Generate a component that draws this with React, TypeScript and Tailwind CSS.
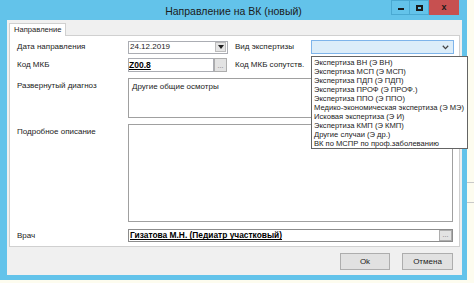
import React from "react";

const font = { fontFamily: '"Liberation Sans", Arial, sans-serif' };

function DotsButton() {
  return (
    <div className="w-[13px] h-full bg-[#e3e3e3] border border-[#adadad] flex items-end justify-center text-[7px] leading-none text-[#707070] pb-[2px]">
      ...
    </div>
  );
}

const items = [
  "Экспертиза ВН (Э ВН)",
  "Экспертиза МСП (Э МСП)",
  "Экспертиза ПДП (Э ПДП)",
  "Экспертиза ПРОФ (Э ПРОФ.)",
  "Экспертиза ППО (Э ППО)",
  "Медико-экономическая экспертиза (Э МЭ)",
  "Исковая экспертиза (Э И)",
  "Экспертиза КМП (Э КМП)",
  "Другие случаи (Э др.)",
  "ВК по МСПР по проф.заболеванию",
];

export default function App() {
  return (
    <div
      className="w-[474px] h-[283px] bg-[#fdfcef] relative overflow-hidden text-[#222]"
      style={font}
    >
      {/* background faint lines to the right */}
      <div className="absolute left-[467px] top-[182px] w-[7px] h-px bg-[#c9c9c9]" />
      <div className="absolute left-[467px] top-[202px] w-[7px] h-px bg-[#c9c9c9]" />

      {/* window */}
      <div className="w-[467px] h-[280px] bg-[#63c3ea] flex flex-col">
        {/* title bar */}
        <div className="h-[20px] relative flex items-center justify-center">
          <span className="text-[10.5px] text-[#1b1b1b] mt-[3px]">Направление на ВК (новый)</span>
          <div className="absolute right-[8px] top-0 flex h-[15px]">
            <div className="w-[19px] h-full border border-[#4aa9d2] flex items-center justify-center">
              <div className="w-[6px] h-[2px] bg-[#1a1a1a] mt-[3px]" />
            </div>
            <div className="w-[19px] h-full border border-[#4aa9d2] border-l-0 flex items-center justify-center">
              <div className="w-[7px] h-[6px] border-[2px] border-[#1a1a1a]" />
            </div>
            <div className="w-[30px] h-full bg-[#c75050] flex items-center justify-center">
              <span className="text-[9px] font-bold leading-none text-[#1a1a1a]">x</span>
            </div>
          </div>
        </div>

        {/* client */}
        <div className="flex-1 ml-[7px] mr-[5px] mb-[5px] bg-[#f0f0f0] flex flex-col">
          {/* tab strip */}
          <div className="h-[15px] flex items-end pl-[2px]">
            <div className="w-[57px] h-[13px] bg-white border border-b-0 border-[#d0d0d0] text-[7.6px] leading-none flex items-center pl-[4px] relative z-10 -mb-px">
              Направление
            </div>
          </div>

          {/* panel */}
          <div className="mx-[2px] h-[212px] bg-white border border-[#d0d0d0] flex flex-col pl-[7px] pt-[4px]">
            {/* row 1 */}
            <div className="h-[14px] flex items-center text-[8px]">
              <div className="w-[111px]">Дата направления</div>
              <div className="w-[100px] h-[13px] border border-[#abadb3] flex items-center">
                <span className="flex-1 pl-px leading-none">24.12.2019</span>
                <div className="w-[11px] h-[10px] mr-px bg-[#e5e5e5] border border-[#bcbcbc] flex items-center justify-center">
                  <svg width="6" height="4" viewBox="0 0 6 4"><path d="M0 0h6L3 4z" fill="#222" /></svg>
                </div>
              </div>
              <div className="w-[76px] ml-[7px]">Вид экспертизы</div>
              <div className="w-[143px] h-[14px] bg-[#dcedf9] border border-[#7eb4ea] flex items-center justify-end pr-[4px]">
                <svg width="7" height="5" viewBox="0 0 7 5"><path d="M0.8 0.8L3.5 3.6L6.2 0.8" stroke="#444" strokeWidth="1.3" fill="none" /></svg>
              </div>
            </div>

            {/* row 2 */}
            <div className="h-[14px] mt-[4px] flex items-center text-[8px]">
              <div className="w-[111px]">Код МКБ</div>
              <div className="w-[86px] h-[14px] border border-[#abadb3] flex items-center">
                <span className="font-bold underline text-[8.5px] leading-none text-black">Z00.8</span>
              </div>
              <div className="h-[14px]"><DotsButton /></div>
              <div className="ml-[8px]">Код МКБ сопутств.</div>
            </div>

            {/* textarea 1 */}
            <div className="h-[40px] mt-[6px] flex text-[8px]">
              <div className="w-[111px] pt-[2px]">Развернутый диагноз</div>
              <div className="w-[325px] h-full border border-[#a0a0a0] pl-[3px] pt-[2px]">Другие общие осмотры</div>
            </div>

            {/* textarea 2 */}
            <div className="h-[98px] mt-[6px] flex text-[8px]">
              <div className="w-[111px] pt-[2px]">Подробное описание</div>
              <div className="w-[325px] h-full border border-[#a0a0a0]" />
            </div>

            {/* doctor */}
            <div className="h-[13px] mt-[7px] flex items-center text-[8px]">
              <div className="w-[111px]">Врач</div>
              <div className="w-[325px] h-full border border-[#8c8c8c] flex items-center">
                <span className="flex-1 pl-px font-bold underline text-[8.4px] leading-none text-black">Гизатова М.Н. (Педиатр участковый)</span>
                <div className="h-[11px]"><DotsButton /></div>
              </div>
            </div>
          </div>

          {/* button bar */}
          <div className="flex-1 flex items-start justify-end pt-[6px] pr-[9px] gap-[12px] text-[8px]">
            <div className="w-[50px] h-[17px] bg-[#e1e1e1] border border-[#adadad] flex items-center justify-center">Ok</div>
            <div className="w-[51px] h-[17px] bg-[#e1e1e1] border border-[#adadad] flex items-center justify-center">Отмена</div>
          </div>
        </div>
      </div>

      {/* dropdown list */}
      <div className="absolute left-[311px] top-[56px] w-[157px] h-[93px] bg-white border border-[#646464] flex flex-col pt-[1px] pl-[2px] text-[7.6px] z-20">
        {items.map((t) => (
          <div key={t} className="h-[9px] leading-[9px] whitespace-nowrap">{t}</div>
        ))}
      </div>
    </div>
  );
}
